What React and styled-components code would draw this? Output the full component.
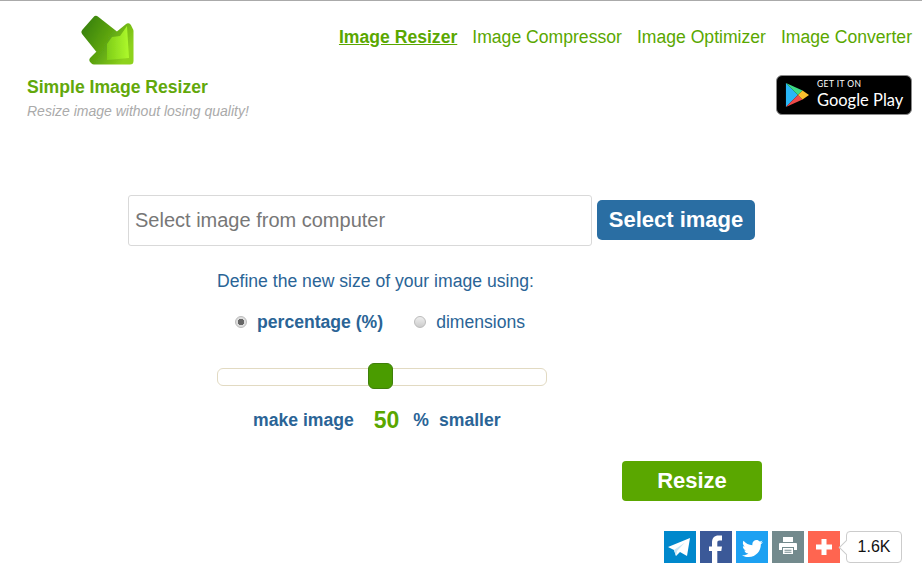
import React from 'react';
import styled, { createGlobalStyle } from 'styled-components';

const GlobalStyle = createGlobalStyle`
  * { box-sizing: border-box; }
  html, body { margin: 0; padding: 0; background: #fff; }
  body { font-family: "Liberation Sans", Arial, sans-serif; }
`;

const Page = styled.div`
  width: 922px;
  height: 583px;
  overflow: hidden;
  border-top: 1px solid #aaa;
  background: #fff;
`;

const Header = styled.header`
  display: flex;
  justify-content: space-between;
  height: 194px;
  padding: 14px 10px 0 27px;
`;

const Brand = styled.div`
  display: flex;
  flex-direction: column;
`;

const LogoWrap = styled.div`
  height: 52px;
  padding-left: 54px;
`;

const BrandName = styled.div`
  margin-top: 10px;
  font-size: 17.6px;
  line-height: 20px;
  font-weight: bold;
  color: #62a80a;
`;

const Tagline = styled.div`
  margin-top: 5px;
  font-size: 14px;
  line-height: 18px;
  font-style: italic;
  color: #aaa;
`;

const HeaderRight = styled.div`
  display: flex;
  flex-direction: column;
  align-items: flex-end;
`;

const Nav = styled.nav`
  display: flex;
  gap: 15px;
  padding-top: 11px;
`;

const NavLink = styled.a`
  font-size: 17.6px;
  line-height: 22px;
  color: #5aa700;
  font-weight: ${(p) => (p.$active ? 'bold' : 'normal')};
  text-decoration: ${(p) => (p.$active ? 'underline' : 'none')};
`;

const PlayBadge = styled.div`
  display: flex;
  align-items: center;
  gap: 8px;
  width: 136px;
  height: 40px;
  margin-top: 27px;
  padding-left: 8px;
  background: #000;
  border: 1px solid #8a8a8a;
  border-radius: 6px;
  color: #fff;
`;

const PlayText = styled.div`
  display: flex;
  flex-direction: column;
  gap: 1px;
  font-family: Lato, sans-serif;
`;

const PlaySmall = styled.span`
  font-size: 8.5px;
  line-height: 9px;
  letter-spacing: 0.4px;
`;

const PlayBig = styled.span`
  font-size: 16.5px;
  line-height: 20px;
  white-space: nowrap;
`;

const Main = styled.main`
  display: flex;
  flex-direction: column;
  padding-left: 128px;
`;

const FileRow = styled.div`
  display: flex;
  align-items: flex-start;
  gap: 5px;
`;

const FileInput = styled.div`
  width: 464px;
  height: 51px;
  padding-left: 6px;
  display: flex;
  align-items: center;
  border: 1px solid #d9d9d9;
  border-radius: 3px;
  font-size: 20px;
  color: #777;
`;

const SelectButton = styled.button`
  width: 158px;
  height: 40px;
  margin-top: 5px;
  padding: 0;
  border: 0;
  border-radius: 5px;
  background: #2a6ea3;
  color: #fff;
  font-family: inherit;
  font-size: 22px;
  font-weight: bold;
`;

const Options = styled.div`
  width: 330px;
  margin-left: 89px;
  display: flex;
  flex-direction: column;
  color: #2a6496;
`;

const Prompt = styled.div`
  margin-top: 24px;
  font-size: 17.6px;
  line-height: 22px;
`;

const RadioRow = styled.div`
  display: flex;
  align-items: center;
  height: 24px;
  margin-top: 18px;
  padding-left: 18px;
  white-space: nowrap;
`;

const RadioDot = styled.span`
  flex: none;
  width: 12px;
  height: 12px;
  margin-right: 10px;
  border-radius: 50%;
  border: 1px solid #bbb;
  background: ${(p) =>
    p.$checked ? 'radial-gradient(circle, #666 0 3px, #ddd 3.5px)' : 'linear-gradient(#eee, #ccc)'};
`;

const RadioLabel = styled.span`
  font-size: 17.6px;
  margin-right: 31px;
  font-weight: ${(p) => (p.$checked ? 'bold' : 'normal')};
`;

const Track = styled.div`
  position: relative;
  height: 18px;
  margin-top: 34px;
  border: 1px solid #e2dac2;
  border-radius: 6px;
  background: #fff;
`;

const Thumb = styled.span`
  position: absolute;
  left: 150px;
  top: -6px;
  width: 25px;
  height: 26px;
  border: 1px solid #3f7f0a;
  border-radius: 6px;
  background: #4a9c00;
`;

const AmountRow = styled.div`
  display: flex;
  align-items: center;
  height: 30px;
  margin-top: 19px;
  padding-left: 36px;
  font-size: 17.6px;
  font-weight: bold;
`;

const AmountValue = styled.span`
  margin: 0 14px 0 20px;
  font-size: 23px;
  color: #5aa700;
`;

const Percent = styled.span`
  margin-right: 10px;
`;

const ResizeRow = styled.div`
  margin-top: 26px;
  padding-left: 494px;
`;

const ResizeButton = styled.button`
  width: 140px;
  height: 40px;
  padding: 0;
  border: 0;
  border-radius: 4px;
  background: #5aa700;
  color: #fff;
  font-family: inherit;
  font-size: 22px;
  font-weight: bold;
`;

const ShareBar = styled.div`
  display: flex;
  align-items: center;
  justify-content: flex-end;
  gap: 4px;
  margin-top: 30px;
  padding-right: 20px;
`;

const ShareIcon = styled.a`
  display: block;
  width: 32px;
  height: 32px;
  background: ${(p) => p.$color};
  svg { display: block; fill: #fff; }
`;

const ShareCount = styled.div`
  position: relative;
  width: 56px;
  height: 32px;
  margin-left: 2px;
  display: flex;
  align-items: center;
  justify-content: center;
  border: 1px solid #ccc;
  border-radius: 4px;
  font-size: 16px;
  color: #111;
  &::before {
    content: '';
    position: absolute;
    left: -6px;
    top: 10px;
    width: 10px;
    height: 10px;
    background: #fff;
    border-left: 1px solid #ccc;
    border-bottom: 1px solid #ccc;
    transform: rotate(45deg);
  }
`;

const Logo = () => (
  <svg width="54" height="52" viewBox="0 0 54 52">
    <defs>
      <linearGradient id="logoBody" x1="0" y1="0.2" x2="1" y2="0.7">
        <stop offset="0" stopColor="#3c8508" />
        <stop offset="0.55" stopColor="#62a912" />
        <stop offset="1" stopColor="#8ed21c" />
      </linearGradient>
      <linearGradient id="logoFold" x1="0" y1="0" x2="1" y2="0">
        <stop offset="0" stopColor="#7fce18" />
        <stop offset="1" stopColor="#aef92c" />
      </linearGradient>
      <filter id="logoSoft">
        <feGaussianBlur stdDeviation="0.5" />
      </filter>
    </defs>
    <g filter="url(#logoSoft)">
      <path
        d="M4 17 L15 4.500 L36 21 L47 12 L49 16 L49 46 L13 46 L12 45 L20 37 Z"
        fill="url(#logoBody)"
        stroke="url(#logoBody)"
        strokeWidth="7"
        strokeLinejoin="round"
      />
      <path d="M26 29 L31 22 L39 21 L46 11 L48 43 L26 45 Z" fill="url(#logoFold)" />
    </g>
  </svg>
);

const PlayLogo = () => (
  <svg width="24" height="26" viewBox="0 0 26 28">
    <path d="M1 1 L1 27 L14 14 Z" fill="#29b6f6" />
    <path d="M1 1 L14 14 L19 9 Z" fill="#3ddc84" />
    <path d="M1 27 L14 14 L19 19 Z" fill="#ef4a4a" />
    <path d="M19 9 L14 14 L19 19 L26 14 Z" fill="#fbc02d" />
  </svg>
);

const Telegram = () => (
  <svg width="32" height="32" viewBox="0 0 32 32">
    <path d="M4 16 L26 7 L23 25 L16 21 L12 25 L10 19 Z" />
    <path d="M10 19 L21 11.500 L13 20 L12 25 Z" fill="#c8e6f5" />
  </svg>
);

const Facebook = () => (
  <svg width="32" height="32" viewBox="0 0 32 32">
    <path d="M12 32 V20 H9 V15.500 H12 V11.500 C12 7 14.500 4.500 18.500 4.500 H22 V9.500 H19.500 C17.800 9.500 17.300 10.300 17.300 12 V15.500 H22 L21.300 20 H17.300 V32 Z" />
  </svg>
);

const Twitter = () => (
  <svg width="32" height="32" viewBox="0 0 32 32">
    <path
      transform="translate(6 9) scale(.875)"
      d="M24 2.4 c-.9.4-1.8.7-2.8.8 1-.6 1.8-1.6 2.200-2.700 -1 .6-2 1-3.100 1.200 C19.400.7 18.100 0 16.700 0 c-2.700 0-4.900 2.200-4.900 4.900 0 .4 0 .8.1 1.100 C7.800 5.800 4.200 3.900 1.700.9 c-.4.7-.7 1.600-.7 2.500 0 1.700.9 3.200 2.200 4.100 -.8 0-1.600-.2-2.200-.6 v.1 c0 2.400 1.700 4.400 3.900 4.800 -.4.1-.8.2-1.300.2 -.3 0-.6 0-.9-.1 .6 2 2.400 3.400 4.600 3.400 -1.700 1.300-3.800 2.100-6.100 2.100 -.4 0-.8 0-1.200-.1 C2.200 18.700 4.800 19.500 7.500 19.500 c9.100 0 14-7.500 14-14 v-.6 c1-.7 1.800-1.600 2.500-2.500 Z"
    />
  </svg>
);

const Printer = () => (
  <svg width="32" height="32" viewBox="0 0 32 32">
    <path d="M11 6 H21 V11 H11 Z" />
    <path d="M8 12 H24 Q25 12 25 13 V19 H22 V16 H10 V19 H7 V13 Q7 12 8 12 Z" />
    <path
      d="M11 17 H21 V23 H11 Z M12.500 18.800 V19.800 H19.500 V18.800 Z M12.500 20.800 V21.800 H19.500 V20.800 Z"
      fillRule="evenodd"
    />
  </svg>
);

const Plus = () => (
  <svg width="32" height="32" viewBox="0 0 32 32">
    <path d="M13.500 8 H18.500 V13.500 H24 V18.500 H18.500 V24 H13.500 V18.500 H8 V13.500 H13.500 Z" />
  </svg>
);

const navItems = ['Image Resizer', 'Image Compressor', 'Image Optimizer', 'Image Converter'];

const shareItems = [
  { name: 'telegram', color: '#0088cc', Icon: Telegram },
  { name: 'facebook', color: '#3b5998', Icon: Facebook },
  { name: 'twitter', color: '#1da1f2', Icon: Twitter },
  { name: 'print', color: '#738a8d', Icon: Printer },
  { name: 'more', color: '#ff6550', Icon: Plus },
];

function App() {
  return (
    <Page>
      <GlobalStyle />
      <Header>
        <Brand>
          <LogoWrap>
            <Logo />
          </LogoWrap>
          <BrandName>Simple Image Resizer</BrandName>
          <Tagline>Resize image without losing quality!</Tagline>
        </Brand>
        <HeaderRight>
          <Nav>
            {navItems.map((item, i) => (
              <NavLink key={item} $active={i === 0}>
                {item}
              </NavLink>
            ))}
          </Nav>
          <PlayBadge>
            <PlayLogo />
            <PlayText>
              <PlaySmall>GET IT ON</PlaySmall>
              <PlayBig>Google Play</PlayBig>
            </PlayText>
          </PlayBadge>
        </HeaderRight>
      </Header>
      <Main>
        <FileRow>
          <FileInput>Select image from computer</FileInput>
          <SelectButton>Select image</SelectButton>
        </FileRow>
        <Options>
          <Prompt>Define the new size of your image using:</Prompt>
          <RadioRow>
            <RadioDot $checked />
            <RadioLabel $checked>percentage (%)</RadioLabel>
            <RadioDot />
            <RadioLabel>dimensions</RadioLabel>
          </RadioRow>
          <Track>
            <Thumb />
          </Track>
          <AmountRow>
            make image
            <AmountValue>50</AmountValue>
            <Percent>%</Percent>
            smaller
          </AmountRow>
        </Options>
        <ResizeRow>
          <ResizeButton>Resize</ResizeButton>
        </ResizeRow>
      </Main>
      <ShareBar>
        {shareItems.map(({ name, color, Icon }) => (
          <ShareIcon key={name} $color={color}>
            <Icon />
          </ShareIcon>
        ))}
        <ShareCount>1.6K</ShareCount>
      </ShareBar>
    </Page>
  );
}

export default App;
